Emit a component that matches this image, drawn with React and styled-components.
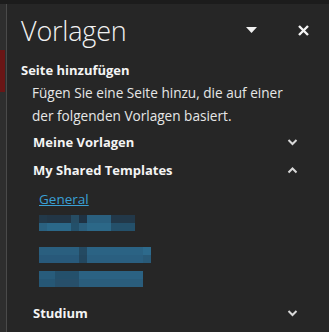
import React from 'react';
import styled, { createGlobalStyle } from 'styled-components';

const Global = createGlobalStyle`
  html, body {
    margin: 0;
    padding: 0;
    background: #262626;
  }
  body {
    font-family: "Open Sans", "Noto Sans", sans-serif;
  }
`;

const Frame = styled.div`
  width: 329px;
  height: 332px;
  display: flex;
  flex-direction: column;
  overflow: hidden;
  background: #262626;
`;

const TopEdge = styled.div`
  height: 4px;
  background: #1c1c1c;
  flex-shrink: 0;
`;

const Body = styled.div`
  flex: 1;
  display: flex;
`;

const LeftStrip = styled.div`
  width: 6px;
  background: #2e2e2e;
  border-right: 1px solid #4a4a4a;
  display: flex;
  flex-direction: column;
  padding-top: 46px;
`;

const RedMark = styled.div`
  width: 5px;
  height: 42px;
  background: #6a1616;
`;

const Panel = styled.div`
  flex: 1;
  padding: 0 0 0 14px;
  display: flex;
  flex-direction: column;
  color: #f0f0f0;
`;

const Header = styled.div`
  display: flex;
  align-items: center;
  height: 52px;
  padding-right: 20px;
`;

const Title = styled.h1`
  margin: 0;
  flex: 1;
  font-size: 27px;
  line-height: 32px;
  font-weight: 300;
  color: #f2f2f2;
  letter-spacing: -0.2px;
  padding-top: 2px;
`;

const IconBtn = styled.span`
  display: inline-flex;
  width: 12px;
  justify-content: center;
  margin-left: ${p => p.$gap || 0}px;
`;

const Section = styled.h2`
  margin: 5px 0 0;
  font-size: 13px;
  line-height: 18px;
  font-weight: 700;
  color: #f4f4f4;
`;

const Desc = styled.p`
  margin: 2px 0 0 11px;
  font-size: 13.6px;
  line-height: 23px;
  color: #e6e6e6;
  width: 272px;
`;

const GroupRow = styled.div`
  display: flex;
  align-items: center;
  justify-content: space-between;
  height: 28px;
  margin-left: 12px;
  padding-right: 31px;
  font-size: 13px;
  font-weight: 700;
  color: #f4f4f4;
  margin-top: ${p => p.$mt || 0}px;
`;

const Items = styled.div`
  display: flex;
  flex-direction: column;
  padding: 7px 0 0 18px;
`;

const Link = styled.a`
  font-size: 13.5px;
  color: #3aa0d6;
  text-decoration: underline;
  line-height: 16px;
  align-self: flex-start;
`;

const Mosaic = styled.div`
  display: grid;
  grid-template-rows: 8px 8px;
  grid-auto-flow: column;
  justify-content: start;
  margin-top: ${p => p.$mt}px;
  filter: blur(0.6px);
`;

const Tile = styled.span`
  width: ${p => p.$w}px;
  background: ${p => p.$c};
`;

const Chevron = ({ up }) => (
  <svg width="11" height="8" viewBox="0 0 11 8">
    <path
      d={up ? 'M1.5 6.5 L5.5 2.5 L9.5 6.5' : 'M1.5 2 L5.5 6 L9.5 2'}
      fill="none"
      stroke="#d8d8d8"
      strokeWidth="2"
    />
  </svg>
);

// each column: [width, top colour, bottom colour]
const mosaics = [
  {
    mt: 8,
    cols: [[8, '#22394a', '#2a6180'], [24, '#223646', '#2b6889'], [8, '#264c63', '#23506a'], [8, '#1f3243', '#2a5e7c'], [24, '#2a5f7e', '#2c6888'], [24, '#223849', '#24506a']],
  },
  {
    mt: 16,
    cols: [[40, '#2a5f7f', '#28597a'], [8, '#244a62', '#23475f'], [56, '#2b6384', '#2a5f80'], [8, '#2d6a8c', '#295a78']],
  },
  {
    mt: 8,
    cols: [[16, '#285c7b', '#265775'], [24, '#24506b', '#274f6a'], [64, '#2b6283', '#2a5d7c']],
  },
];

export default function App() {
  return (
    <Frame>
      <Global />
      <TopEdge />
      <Body>
        <LeftStrip>
          <RedMark />
        </LeftStrip>
        <Panel>
          <Header>
            <Title>Vorlagen</Title>
            <IconBtn>
              <svg width="11" height="6" viewBox="0 0 11 6">
                <path d="M0 0 H11 L5.5 6 Z" fill="#f0f0f0" />
              </svg>
            </IconBtn>
            <IconBtn $gap={40}>
              <svg width="11" height="11" viewBox="0 0 11 11">
                <path d="M1 1 L10 10 M10 1 L1 10" stroke="#f4f4f4" strokeWidth="2.4" />
              </svg>
            </IconBtn>
          </Header>
          <Section>Seite hinzufügen</Section>
          <Desc>Fügen Sie eine Seite hinzu, die auf einer der folgenden Vorlagen basiert.</Desc>
          <GroupRow $mt={1}>
            <span>Meine Vorlagen</span>
            <Chevron />
          </GroupRow>
          <GroupRow>
            <span>My Shared Templates</span>
            <Chevron up />
          </GroupRow>
          <Items>
            <Link href="#">General</Link>
            {mosaics.map((m, i) => (
              <Mosaic key={i} $mt={m.mt}>
                {m.cols.flatMap(([w, top, bottom], j) => [
                  <Tile key={j + 't'} $w={w} $c={top} />,
                  <Tile key={j + 'b'} $w={w} $c={bottom} />,
                ])}
              </Mosaic>
            ))}
          </Items>
          <GroupRow $mt={12}>
            <span>Studium</span>
            <Chevron />
          </GroupRow>
        </Panel>
      </Body>
    </Frame>
  );
}
